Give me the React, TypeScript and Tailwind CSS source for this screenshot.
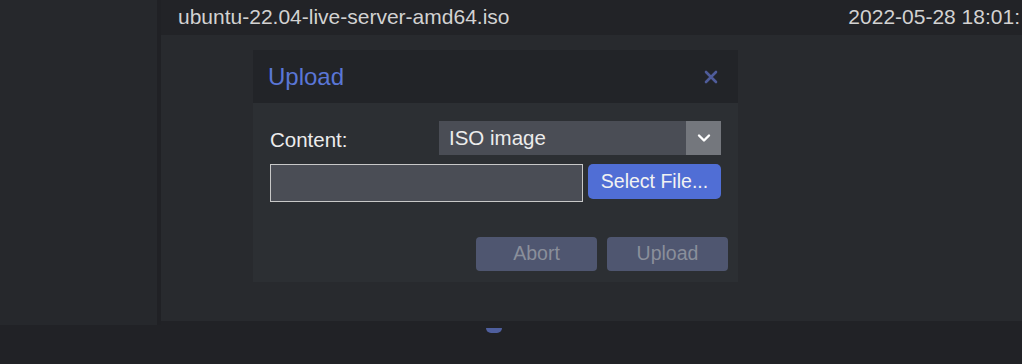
import React from "react";

export default function App() {
  const font = { fontFamily: '"Liberation Sans", Arial, sans-serif' };
  return (
    <div className="w-[1022px] h-[364px] bg-[#212226] overflow-hidden flex flex-col" style={font}>
      <div className="flex h-[325px]">
        <div className="w-[157px] bg-[#26282c]" />
        <div className="w-[4px] bg-[#202125]" />
        <div className="flex-1 flex flex-col">
          <div className="h-[35px] bg-[#222327] flex items-center justify-between pl-[17px] pr-[2px] whitespace-nowrap overflow-hidden">
            <span className="text-[21px] text-[#d2d2d2] leading-none -mt-[2px]">ubuntu-22.04-live-server-amd64.iso</span>
            <span className="text-[21px] text-[#d2d2d2] leading-none -mt-[2px]">2022-05-28 18:01:</span>
          </div>
          <div className="h-[286px] bg-[#282a2e] pl-[92px] pt-[15px]">
            <div className="w-[485px] flex flex-col">
              <div className="h-[53px] bg-[#222428] flex items-center justify-between pl-[15px] pr-[20px]">
                <span className="text-[24px] text-[#5a76d6] leading-none">Upload</span>
                <svg width="14" height="14" viewBox="0 0 14 14">
                  <path d="M2 2 L12 12 M12 2 L2 12" stroke="#4f5c9a" strokeWidth="2.6" strokeLinecap="round" />
                </svg>
              </div>
              <div className="h-[179px] bg-[#2c2f33] flex flex-col pl-[17px] pr-[10px] pt-[18px]">
                <div className="flex items-center h-[34px] pr-[7px]">
                  <span className="w-[169px] text-[20.5px] text-[#ececec] leading-none mt-[4px]">Content:</span>
                  <div className="flex-1 h-[34px] bg-[#4a4d55] flex items-center">
                    <span className="flex-1 pl-[10px] text-[20.5px] text-[#ececec] leading-none">ISO image</span>
                    <div className="w-[35px] h-[34px] bg-[#74777d] flex items-center justify-center">
                      <svg width="14" height="10" viewBox="0 0 14 10">
                        <path d="M2 2.5 L7 7.5 L12 2.5" stroke="#ffffff" strokeWidth="2.4" fill="none" strokeLinecap="round" strokeLinejoin="round" />
                      </svg>
                    </div>
                  </div>
                </div>
                <div className="flex items-start gap-[5px] mt-[9px] pr-[7px]">
                  <div className="w-[313px] h-[38px] bg-[#4a4d55] border border-[#c8c8c8]" />
                  <button className="w-[133px] h-[35px] bg-[#506ed5] rounded-[5px] text-[19.5px] text-[#f2f2f2] leading-none">
                    Select File...
                  </button>
                </div>
                <div className="flex justify-end gap-[10px] mt-[35px]">
                  <button className="w-[121px] h-[34px] bg-[#4f5670] rounded-[4px] text-[19.5px] text-[#8a8f9b] leading-none">
                    Abort
                  </button>
                  <button className="w-[121px] h-[34px] bg-[#4f5670] rounded-[4px] text-[19.5px] text-[#8a8f9b] leading-none">
                    Upload
                  </button>
                </div>
              </div>
            </div>
          </div>
        </div>
      </div>
      <div className="flex-1 pl-[486px] pt-[3px]">
        <div className="w-[16px] h-[5px] bg-[#4f5f9e] rounded-b-full" />
      </div>
    </div>
  );
}
